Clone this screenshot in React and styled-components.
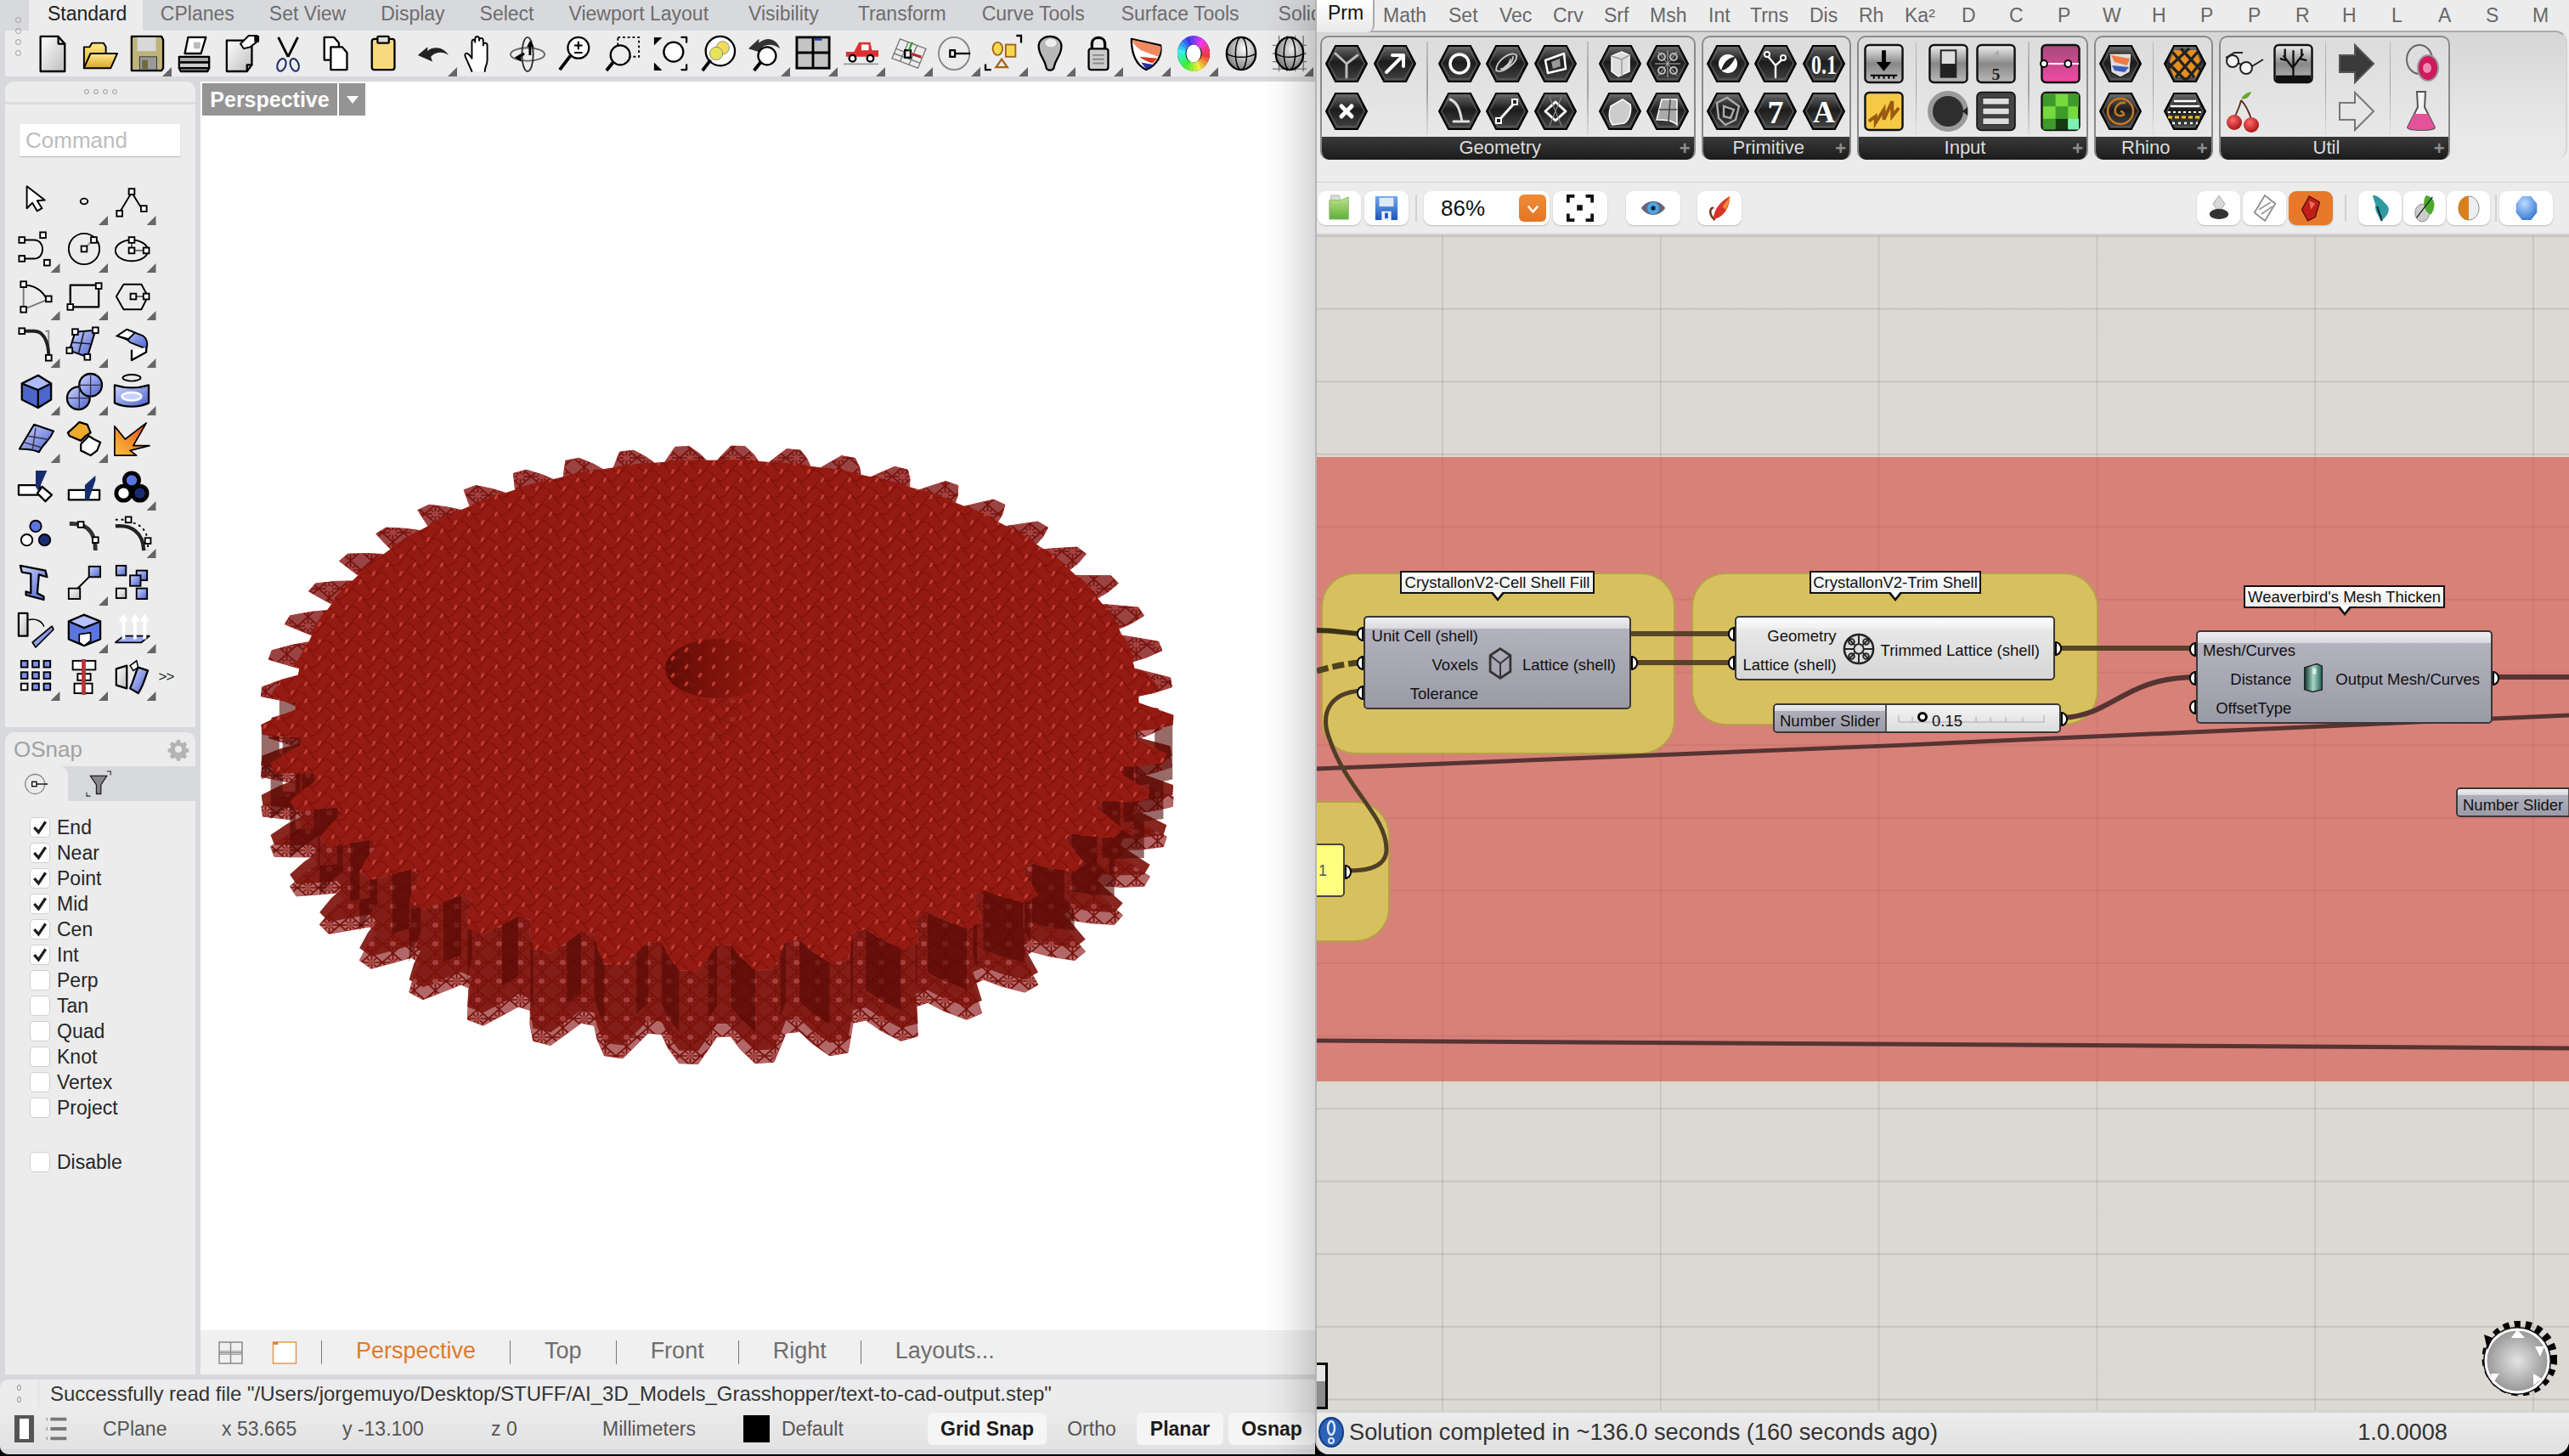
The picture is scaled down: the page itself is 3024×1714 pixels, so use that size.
import React from 'react';
import styled, { createGlobalStyle } from 'styled-components';

const Global = createGlobalStyle`
  html, body { margin: 0; padding: 0; background: #000; overflow: hidden; }
  #root { width: 3024px; height: 1714px; }
  * { box-sizing: border-box; }
`;
const SANS = '"Liberation Sans", Arial, sans-serif';
const CX = 1550, CY = 277;

const Root = styled.div`display:flex;width:3024px;height:1712px;background:#000;font-family:${SANS};overflow:hidden;`;
const Defs = styled.svg`width:0;height:0;flex:none;display:block;`;
const G = styled.svg`display:block;flex:none;width:${p => p.$w || 44}px;height:${p => p.$h || p.$w || 44}px;overflow:visible;`;

/* ---------- Rhino window ---------- */
const Rhino = styled.div`width:1548px;flex:none;display:flex;flex-direction:column;background:#d8d9dc;overflow:hidden;border-bottom-left-radius:10px;`;
const RhTabs = styled.div`height:36px;flex:none;display:flex;padding-left:34px;background:#d8d9dc;`;
const RhTab = styled.div`
  height:36px;padding:0 ${p => (p.$on ? 19 : 20.5 + (p.$extra || 0))}px 0 ${p => (p.$on ? '22px' : '20.5px')};
  font-size:23px;line-height:32px;white-space:nowrap;color:${p => (p.$on ? '#222' : '#6c6c6e')};
  background:${p => (p.$on ? '#ececec' : 'transparent')};
`;
const RhTools = styled.div`height:54px;flex:none;display:flex;align-items:center;background:#ececec;padding-left:33px;border-left:6px solid #d8d9dc;position:relative;`;
const Cell = styled.div`
  width:${p => p.$w || 56}px;height:${p => p.$h || 54}px;flex:none;display:flex;align-items:center;justify-content:center;position:relative;
  ${p => p.$fly ? `&::after{content:"";position:absolute;right:${p.$r ?? 0}px;bottom:0;width:11px;height:11px;background:#666;clip-path:polygon(100% 0,100% 100%,0 100%);}` : ''}
`;
const ToolsRow = styled.div`display:flex;margin-left:-6px;`;
const GripDots = styled.div`
  position:absolute;left:12px;top:-16px;display:flex;flex-direction:column;gap:6px;
  & i{display:block;width:7px;height:7px;border:1.5px solid #9a9a9a;border-radius:50%;}
`;
const RhBar = styled.div`height:6px;flex:none;background:#d8d9dc;`;
const RhMain = styled.div`flex:1;min-height:0;display:flex;padding-left:6px;gap:6px;`;
const LeftCol = styled.div`width:224px;flex:none;display:flex;flex-direction:column;gap:6px;`;
const ToolPanel = styled.div`height:760px;flex:none;background:#ececec;border-top-left-radius:10px;border-top-right-radius:10px;display:flex;flex-direction:column;`;
const PanelGrip = styled.div`height:27px;flex:none;border-bottom:3px solid #dcdcdf;display:flex;justify-content:center;align-items:center;gap:5px;& i{display:block;width:6px;height:6px;border:1.5px solid #9a9a9a;border-radius:50%;}`;
const CommandBox = styled.div`margin:23px 18px 0 17px;height:38px;background:#fff;box-shadow:0 1px 1px #bbb;color:#bdbdbd;font-size:26px;line-height:38px;padding-left:7px;`;
const ToolGrid = styled.div`margin:25px 0 0 8px;display:grid;grid-template-columns:repeat(4,56.5px);grid-auto-rows:56px;`;
const More = styled.div`font-size:17px;color:#222;display:flex;align-items:center;justify-content:flex-start;padding-left:3px;letter-spacing:-1px;`;
const OSnapPanel = styled.div`flex:1;background:#ececec;border-top-left-radius:10px;border-top-right-radius:10px;display:flex;flex-direction:column;`;
const OSnapHead = styled.div`height:40px;flex:none;display:flex;align-items:center;justify-content:space-between;padding:0 8px 0 10px;font-size:26px;color:#a2a2a2;`;
const OSnapTabs = styled.div`height:41px;flex:none;display:flex;background:#d8d9dc;`;
const OSnapTab = styled.div`width:${p => p.$w}px;display:flex;align-items:center;justify-content:center;background:${p => (p.$on ? '#ececec' : 'transparent')};${p => p.$on ? 'border-top-right-radius:10px;' : ''}`;
const Checks = styled.div`padding:16px 0 0 29px;display:flex;flex-direction:column;`;
const CheckRow = styled.div`height:30px;display:flex;align-items:center;gap:8px;font-size:23px;color:#262626;margin-top:${p => (p.$gap ? '34px' : '0')};`;
const CheckBox = styled.div`width:24px;height:24px;background:#fff;border:1px solid #cfcfcf;border-radius:5px;display:flex;align-items:center;justify-content:center;`;
const ViewCol = styled.div`flex:1;min-width:0;display:flex;flex-direction:column;`;
const Viewport = styled.div`flex:1;min-height:0;position:relative;background:#fff;overflow:hidden;padding:2px;`;
const ViewLabel = styled.div`position:relative;display:flex;gap:2px;height:38px;z-index:2;`;
const ViewName = styled.div`width:159px;background:#949494;color:#fff;font-weight:bold;font-size:25px;line-height:38px;text-align:center;`;
const ViewArrow = styled.div`width:31px;background:#949494;display:flex;align-items:center;justify-content:center;&::after{content:"";border:7px solid transparent;border-top:9px solid #fff;border-bottom:0;}`;
const GearSvg = styled.svg`position:absolute;left:0;top:0;width:1312px;height:1470px;`;
const ViewBar = styled.div`height:52px;flex:none;background:#f0f0f0;display:flex;align-items:center;padding:0 0 0 21px;gap:40px;font-size:27px;line-height:30px;color:#6e6e6e;`;
const ViewIcons = styled.div`display:flex;gap:34px;align-items:center;margin-right:-12px;`;
const ViewSep = styled.div`width:1px;height:28px;background:#777;`;
const ViewTab = styled.div`color:${p => (p.$on ? '#e07a2c' : '#6e6e6e')};white-space:nowrap;margin-top:-4px;`;
const CommandRow = styled.div`height:32px;flex:none;margin-top:6px;background:#ececec;display:flex;align-items:center;border-top-left-radius:10px;font-size:24px;color:#333;white-space:nowrap;padding-top:1px;`;
const CmdGrip = styled.div`width:46px;height:31px;margin-right:13px;border-right:1px solid #ddd;display:flex;flex-direction:column;justify-content:center;align-items:center;gap:7px;& i{display:block;width:5px;height:7px;border:1px solid #9a9a9a;border-radius:50%;}`;
const StatusRow = styled.div`height:50px;flex:none;background:linear-gradient(#ececec,#e2e2e2);display:flex;align-items:center;padding:2px 0 0 17px;font-size:23px;color:#555;white-space:nowrap;`;
const StatusItem = styled.div`width:${p => p.$w}px;flex:none;`;
const StatusIcons = styled.div`width:104px;flex:none;display:flex;align-items:center;gap:10px;`;
const Swatch = styled.div`width:31px;height:32px;background:#000;margin-right:14px;flex:none;`;
const SnapBtn = styled.div`width:${p => p.$w}px;height:38px;flex:none;margin-right:${p => p.$mr || 0}px;background:#f5f5f5;border-radius:6px;font-weight:bold;color:#1c1c1c;display:flex;align-items:center;justify-content:center;`;
const SnapText = styled.div`width:106px;flex:none;text-align:center;`;
const RhFoot = styled.div`height:6px;flex:none;background:#d8d9dc;`;

/* ---------- Grasshopper window ---------- */
const GH = styled.div`flex:1;min-width:0;display:flex;flex-direction:column;border-left:2px solid #b4b4b6;background:#ececec;box-shadow:-14px 0 50px rgba(0,0,0,.22);position:relative;z-index:3;border-bottom-left-radius:16px;border-bottom-right-radius:16px;overflow:hidden;`;
const GhTabs = styled.div`height:36px;flex:none;display:flex;background:#ececec;position:relative;`;
const GhActive = styled.div`width:68px;height:38px;flex:none;background:linear-gradient(#fff,#e9e9e9);font-size:23px;line-height:30px;color:#111;padding-left:13px;border-right:2px solid #aaa;border-bottom-right-radius:8px;position:relative;z-index:1;`;
const GhTab = styled.div`position:absolute;left:${p => p.$x - 1550}px;top:0;font-size:23px;line-height:36px;color:#686868;white-space:nowrap;`;
const Ribbon = styled.div`height:152px;flex:none;margin-right:2px;padding:6px 0 0 4px;display:flex;gap:7px;border-top:2px solid #aaa;border-right:2px solid #d4d4d4;border-top-right-radius:14px;border-bottom-right-radius:14px;background:linear-gradient(#d6d6d6,#e9e9e9 80%);`;
const RGroup = styled.div`display:flex;flex-direction:column;height:146px;flex:none;border-radius:10px;overflow:hidden;border:2px solid #8a8a8a;border-bottom:none;background:linear-gradient(#dcdcdc,#ebebeb);margin-top:-2px;`;
const RBody = styled.div`height:117px;flex:none;display:flex;padding:3px 2px 0 1px;`;
const RSection = styled.div`display:grid;grid-template-columns:repeat(${p => p.$n},56.5px);grid-auto-rows:56px;`;
const RDiv = styled.div`width:1.5px;margin:2px 9px 0;height:110px;background:linear-gradient(#bdbdbd,#a0a0a0 50%,#dedede);`;
const RCell = styled.div`display:flex;align-items:center;justify-content:center;`;
const RBar = styled.div`height:27px;flex:none;background:linear-gradient(#3a3a3a,#1b1b1b);color:#dcdcdc;font-size:22px;line-height:25px;text-align:center;position:relative;padding-right:18px;`;
const Plus = styled.span`position:absolute;right:4px;top:3px;font-size:22px;line-height:22px;color:#8d8d8d;font-weight:bold;`;
const RibbonGap = styled.div`height:26px;flex:none;`;
const GhToolbar = styled.div`height:63px;flex:none;border-top:1px solid #d0d0d0;border-bottom:2px solid #d2d2d2;display:flex;align-items:center;justify-content:space-between;padding:0 19px 0 1px;background:#ececec;`;
const TbGroup = styled.div`display:flex;align-items:center;`;
const TbBtn = styled.div`width:${p => p.$w || 52}px;height:40px;flex:none;margin-left:${p => p.$ml || 0}px;border-radius:9px;background:${p => (p.$on ? '#e8792b' : '#fff')};box-shadow:0 1px 2px rgba(0,0,0,.2);display:flex;align-items:center;justify-content:center;`;
const TbSep = styled.div`width:2px;height:32px;background:#d2d2d2;margin-left:${p => p.$ml}px;flex:none;`;
const Combo = styled(TbBtn)`justify-content:space-between;padding:0 4px 0 20px;font-size:26px;color:#111;`;
const ComboDrop = styled.div`width:32px;height:32px;border-radius:6px;background:linear-gradient(#f08a35,#e37626);display:flex;align-items:center;justify-content:center;`;
const Canvas = styled.div`
  flex:1;min-height:0;position:relative;overflow:hidden;background-color:#dcd9d2;
  background-image:linear-gradient(to right,rgba(60,50,40,.11) 2px,transparent 2px),linear-gradient(to bottom,rgba(60,50,40,.13) 2px,transparent 2px);
  background-size:256.8px 85.6px;background-position:147px 0,0 0;
`;
const at = p => `left:${p.$x - CX}px;top:${p.$y - CY}px;width:${p.$w}px;height:${p.$h}px;`;
const RedGroup = styled.div`position:absolute;${at}background:rgba(214,70,60,.6);`;
const YellowGroup = styled.div`position:absolute;${at}background:rgba(216,198,92,.92);border:2px solid rgba(170,150,70,.75);border-radius:40px;`;
const Wires = styled.svg`position:absolute;left:0;top:0;width:1474px;height:1383px;`;
const Label = styled.div`
  position:absolute;${at}background:linear-gradient(#fff,#ececec);border:2px solid #111;font-size:18.5px;line-height:24px;text-align:center;color:#111;white-space:nowrap;
  &::before{content:"";position:absolute;left:50%;top:100%;margin-left:-9px;border:9px solid transparent;border-top:11px solid #111;border-bottom:0;}
  &::after{content:"";position:absolute;left:50%;top:100%;margin-left:-7px;margin-top:-2px;border:7px solid transparent;border-top:9px solid #fff;border-bottom:0;}
`;
const Node = styled.div`
  position:absolute;${at}border:2px solid #383838;border-radius:5px;color:#111;font-size:18.5px;
  background:${p => (p.$white
    ? 'linear-gradient(#fdfdfd,#efeff0) 0 0/100% 13px no-repeat,linear-gradient(#ececec,#d6d6d6)'
    : 'linear-gradient(#f0f0f2,#d9d9de) 0 0/100% 13px no-repeat,linear-gradient(#b6b6c2,#9b9ba7)')};
`;
const NodeBody = styled.div`display:flex;align-items:center;padding-top:5px;height:100%;`;
const InCol = styled.div`flex:1;min-width:0;text-align:right;padding-left:6px;white-space:nowrap;& div{height:34px;line-height:34px;}`;
const OutCol = styled.div`flex:none;white-space:nowrap;padding-right:${p => p.$pr || 16}px;`;
const NodeIcon = styled.div`width:36px;flex:none;margin:-4px 8px 0 8px;display:flex;justify-content:center;`;
const Port = styled.span`
  position:absolute;top:${p => p.$t}px;${p => (p.$right ? 'right:-10px;border-radius:0 9px 9px 0;border-left:none;' : 'left:-10px;border-radius:9px 0 0 9px;border-right:none;')}
  width:8px;height:17px;background:#fff;border:2.5px solid #000;
`;
const SliderNode = styled.div`position:absolute;${at}border:2px solid #383838;border-radius:5px;display:flex;font-size:18.5px;color:#111;`;
const SliderName = styled.div`width:132px;flex:none;padding:6px 0 0 6px;line-height:26px;white-space:nowrap;background:linear-gradient(#f0f0f2,#d9d9de) 0 0/100% 7px no-repeat,linear-gradient(#b6b6c2,#9b9ba7);border-right:2px solid #555;border-radius:3px 0 0 3px;`;
const SliderRail = styled.div`flex:1;position:relative;background:linear-gradient(#f4f4f4,#dcdcdc);border-radius:0 3px 3px 0;`;
const SliderVal = styled.span`position:absolute;left:53px;top:6px;line-height:26px;`;
const PanelNode = styled.div`position:absolute;${at}background:#ffff80;border:2px solid #444;border-left:none;border-radius:0 5px 5px 0;font-size:18px;color:#555;padding:20px 0 0 2px;`;
const Knob = styled.svg`position:absolute;left:${2920 - CX}px;top:${1555 - CY}px;width:90px;height:92px;`;
const Bracket = styled.div`position:absolute;left:0;bottom:1px;width:13px;height:55px;border:3px solid #000;border-left:none;background:linear-gradient(#e6e6e6 38%,#8d8d8d 38%);`;
const GhStatus = styled.div`height:52px;flex:none;border-top:3px solid #d4d4d4;background:linear-gradient(#ececec,#e0e0e0);display:flex;align-items:center;padding:0 143px 4px 2px;font-size:27.2px;color:#333;white-space:nowrap;`;
const StatusMsg = styled.div`flex:1;margin-left:6px;`;

/* ---------- Small drawing helpers ---------- */
const K = { stroke: '#000', strokeWidth: 2.4, strokeLinejoin: 'round', strokeLinecap: 'round' };
const Sq = ({ x, y, s = 7 }) => <rect x={x - s / 2} y={y - s / 2} width={s} height={s} fill="#fff" stroke="#000" strokeWidth="2" />;

const GradDefs = () => (
  <Defs aria-hidden="true">
    <defs>
      <linearGradient id="gDoc" x1="0" y1="0" x2="1" y2="1"><stop offset="0" stopColor="#fff" /><stop offset="1" stopColor="#bdbdbd" /></linearGradient>
      <linearGradient id="gYel" x1="0" y1="0" x2="0" y2="1"><stop offset="0" stopColor="#ffeb8a" /><stop offset="1" stopColor="#d9a624" /></linearGradient>
      <linearGradient id="gBlue" x1="0" y1="0" x2="1" y2="1"><stop offset="0" stopColor="#cfd7ff" /><stop offset="1" stopColor="#4a60cc" /></linearGradient>
      <linearGradient id="gHex" x1="0" y1="0" x2="0" y2="1"><stop offset="0" stopColor="#6a6a6a" /><stop offset=".45" stopColor="#1c1c1c" /><stop offset="1" stopColor="#444" /></linearGradient>
      <linearGradient id="gSq" x1="0" y1="0" x2="0" y2="1"><stop offset="0" stopColor="#f2f2f2" /><stop offset=".5" stopColor="#888" /><stop offset="1" stopColor="#b9b9b9" /></linearGradient>
      <linearGradient id="gFlame" x1="0" y1="1" x2="1" y2="0"><stop offset="0" stopColor="#fbc23c" /><stop offset="1" stopColor="#e8461c" /></linearGradient>
      <linearGradient id="gGreen" x1="0" y1="0" x2="0" y2="1"><stop offset="0" stopColor="#bfe48a" /><stop offset="1" stopColor="#5fae3a" /></linearGradient>
      <linearGradient id="gFloppy" x1="0" y1="0" x2="0" y2="1"><stop offset="0" stopColor="#6fa8ec" /><stop offset="1" stopColor="#1f56c0" /></linearGradient>
      <radialGradient id="gSph" cx=".6" cy=".35" r=".8"><stop offset="0" stopColor="#fff" /><stop offset="1" stopColor="#666" /></radialGradient>
      <radialGradient id="gKnob" cx=".5" cy=".5" r=".55"><stop offset="0" stopColor="#e4e4e4" /><stop offset="1" stopColor="#8a8a8a" /></radialGradient>
      <radialGradient id="gRed" cx=".4" cy=".35" r=".7"><stop offset="0" stopColor="#ff6a6a" /><stop offset="1" stopColor="#a50f0f" /></radialGradient>
      <radialGradient id="gBall" cx=".4" cy=".3" r=".8"><stop offset="0" stopColor="#bcdcff" /><stop offset="1" stopColor="#2a6fd0" /></radialGradient>
      <linearGradient id="gMag" x1="0" y1="0" x2="0" y2="1"><stop offset="0" stopColor="#a64a7a" /><stop offset="1" stopColor="#f14aa4" /></linearGradient>
      <linearGradient id="gTeal" x1="0" y1="0" x2="1" y2="0"><stop offset="0" stopColor="#0c2e2a" /><stop offset=".5" stopColor="#a8d8c8" /><stop offset="1" stopColor="#1e5a50" /></linearGradient>
    </defs>
  </Defs>
);

const WHEEL_C = 2 * Math.PI * 15;
const wheel = Array.from({ length: 24 }, (_, i) => (
  <circle key={i} cx="22" cy="22" r="15" stroke={`hsl(${i * 15} 85% 58%)`} strokeWidth="10" strokeDasharray={`${WHEEL_C / 24 + 0.6} ${WHEEL_C}`} transform={`rotate(${i * 15} 22 22)`} />
));

/* ---------- Rhino top toolbar icons ---------- */
const topIcons = [
  [0, <><path d="M8 1H30L38 10V44H8Z" fill="url(#gDoc)" {...K} /><path d="M30 1V10H38" {...K} /></>],
  [0, <><path d="M3 40V14H10L13 9H27L30 14V22" fill="url(#gYel)" {...K} strokeWidth="2" /><path d="M3 40L11 22H44L36 40Z" fill="url(#gYel)" {...K} strokeWidth="2" /></>],
  [1, <><path d="M3 1H40L42 5V40L40 43H3Z" fill="#bdb27a" {...K} /><rect x="10" y="2" width="23" height="17" fill="#d8d8d8" /><rect x="13" y="26" width="21" height="16" fill="#9a9a9a" stroke="#333" /><rect x="16" y="30" width="7" height="11" fill="#6f6a3a" /></>],
  [0, <><path d="M14 2H36L30 22H10Z" fill="#fff" {...K} /><rect x="21" y="8" width="8" height="8" fill="#bbb" /><path d="M3 26H40V33H3Z" fill="#aaa" {...K} /><path d="M3 33H40V40H3Z" fill="#ccc" {...K} /><path d="M3 40H40L38 44H5Z" fill="#888" {...K} /></>],
  [0, <><path d="M3 6H34V36L28 44H3Z" fill="url(#gDoc)" {...K} /><path d="M20 10L30 0H40V8L32 14L24 16Z" fill="#fff" stroke="#000" strokeWidth="2" /><rect x="37" y="0" width="6" height="8" fill="#000" /><path d="M28 44V36H34" {...K} /></>],
  [0, <><path d="M8 2L20 26M32 2L20 26" stroke="#000" strokeWidth="3" /><ellipse cx="12" cy="36" rx="5" ry="8" transform="rotate(20 12 36)" fill="none" stroke="#1c2f6a" strokeWidth="2.2" /><ellipse cx="28" cy="36" rx="5" ry="8" transform="rotate(-20 28 36)" fill="none" stroke="#1c2f6a" strokeWidth="2.2" /></>],
  [0, <><path d="M6 2H18L24 9V30H6Z" fill="#fff" {...K} /><path d="M14 14H28L34 21V42H14Z" fill="#fff" {...K} /></>],
  [0, <><rect x="6" y="4" width="28" height="38" rx="3" fill="#f7d97e" {...K} /><rect x="13" y="1" width="14" height="8" rx="1" fill="#ddd" {...K} /></>],
  [1, <><path d="M4 24L16 14V19C24 12 36 14 42 24C34 19 26 20 20 26L22 32Z" fill="#222" /></>],
  [0, <><path d="M12 44L4 26C2 22 6 20 9 24L12 28V8C12 4 16 4 16 8V4C16 0 21 0 21 4V6C21 2 26 2 26 6V12C26 8 31 8 31 12V30C31 36 28 38 28 44" fill="#fff" {...K} strokeWidth="2" /></>],
  [0, <><ellipse cx="22" cy="23" rx="21" ry="8" {...K} stroke="#666" strokeWidth="2" /><ellipse cx="22" cy="23" rx="7" ry="21" {...K} stroke="#333" strokeWidth="2" /><path d="M25 24V10M18 22L10 27" stroke="#000" strokeWidth="3" /><path d="M21 14L25 6L30 14ZM14 22L6 27L14 32Z" fill="#000" /></>],
  [0, <><circle cx="26" cy="15" r="13" fill="#fff" {...K} /><path d="M16 25L3 42" stroke="#000" strokeWidth="4" /><path d="M26 7V17M21 12H31M21 21H31" stroke="#000" strokeWidth="2.2" /></>],
  [0, <><rect x="16" y="2" width="26" height="24" fill="none" stroke="#000" strokeWidth="2" strokeDasharray="3 3" /><circle cx="19" cy="24" r="12" fill="#eee" {...K} /><path d="M10 33L2 43" stroke="#000" strokeWidth="4" /></>],
  [0, <><path d="M2 2H12L2 12ZM2 43H12L2 33Z" fill="#000" /><circle cx="26" cy="20" r="12" fill="#fff" {...K} /><path d="M36 2H42V8M42 36V42H36" {...K} /></>],
  [0, <><ellipse cx="25" cy="19" rx="18" ry="18" fill="#fff" {...K} /><circle cx="28" cy="15" r="8" fill="#f3dc50" stroke="#888" /><circle cx="20" cy="22" r="8" fill="#e6e25a" stroke="#888" /><path d="M13 30L3 43" stroke="#000" strokeWidth="4" /></>],
  [1, <><path d="M1 16L14 4V9C24 0 36 4 40 16C32 10 24 10 18 14L20 22Z" fill="#333" /><circle cx="24" cy="25" r="11" fill="#fff" {...K} /><path d="M16 33L8 43" stroke="#000" strokeWidth="4" /></>],
  [1, <><rect x="2" y="2" width="40" height="38" fill="#c4c4c4" stroke="#000" strokeWidth="3" /><path d="M22 2V40M2 21H42" stroke="#000" strokeWidth="3" /><rect x="24" y="3" width="9" height="3" fill="#1b3fa8" /></>],
  [1, <><path d="M4 26V20H14L20 8H34L36 18H44V26Z" fill="#de3030" /><rect x="23" y="11" width="9" height="7" fill="#fff" /><circle cx="12" cy="28" r="4" fill="#fff" stroke="#000" strokeWidth="2.4" /><circle cx="34" cy="28" r="4" fill="#fff" stroke="#000" strokeWidth="2.4" /><path d="M1 35H44" stroke="#999" strokeWidth="2" /></>],
  [1, <><path d="M12 4L44 16L34 40L2 28ZM22 8L12 32M33 12L23 36M7 16L39 28M5 22L37 34" stroke="#777" strokeWidth="1.4" /><rect x="18" y="18" width="7" height="9" fill="#fff" stroke="#000" strokeWidth="2.4" /><path d="M25 22L38 26" stroke="#c02020" strokeWidth="3" /><path d="M23 18L27 8" stroke="#2ea02e" strokeWidth="2.5" /></>],
  [1, <><ellipse cx="20" cy="22" rx="19" ry="20" stroke="#888" strokeWidth="2" /><path d="M22 22H40" stroke="#000" strokeWidth="2.4" /><rect x="15" y="18" width="6" height="8" fill="#fff" stroke="#000" strokeWidth="2.4" /></>],
  [1, <><path d="M38 0H44V9" stroke="#000" strokeWidth="2.4" /><path d="M0 35V42H7" stroke="#000" strokeWidth="2.4" /><ellipse cx="15" cy="16" rx="6" ry="8" fill="#f5d94e" stroke="#a5641c" strokeWidth="2" /><rect x="25" y="11" width="12" height="15" fill="#f5d94e" stroke="#a5641c" strokeWidth="2" /><path d="M20 29L27 39H13Z" stroke="#a5641c" strokeWidth="2.4" /></>],
  [1, <><path d="M16 38C14 28 7 24 7 13C7 5 14 1 21 1C28 1 35 5 35 13C35 24 28 28 26 38C26 44 16 44 16 38Z" fill="#b8b8b8" {...K} /><ellipse cx="22" cy="9" rx="7" ry="5" fill="#eee" /></>],
  [1, <><path d="M14 16V10C14 0 30 0 30 10V16" stroke="#000" strokeWidth="3.5" /><rect x="10" y="16" width="24" height="26" rx="3" fill="#ccc" {...K} /><path d="M15 24H29M15 29H29M15 34H29" stroke="#888" strokeWidth="2" /></>],
  [1, <><path d="M4 4L40 12C42 24 36 36 22 42C10 36 4 24 4 4Z" fill="#fff" {...K} /><path d="M5 5L40 13C41 18 39 22 37 26L16 18C10 14 6 10 5 5Z" fill="#ee8a60" /><path d="M14 26L36 28L30 34C24 32 18 30 14 26Z" fill="#d83a20" /><path d="M16 33L32 36L22 41Z" fill="#2434a0" /></>],
  [1, <><ellipse cx="22" cy="22" rx="20" ry="21.5" fill="#000" /><g transform="translate(0 -2.2) scale(1 1.1)">{wheel}</g><ellipse cx="22" cy="22" rx="9" ry="11" fill="#fff" /></>],
  [0, <><ellipse cx="22" cy="22" rx="18" ry="20" fill="url(#gSph)" {...K} /><ellipse cx="22" cy="22" rx="7" ry="20" {...K} strokeWidth="1.6" /><path d="M4 22C12 28 32 28 40 22" {...K} strokeWidth="1.6" /></>],
  [1, <><path d="M2 12H44M2 22H44M2 32H44M2 41H44M10 0V44M20 0V44M30 0V44M40 0V44" stroke="#777" strokeWidth="1.4" /><ellipse cx="23" cy="22" rx="17" ry="20" fill="url(#gSph)" {...K} /><ellipse cx="23" cy="22" rx="7" ry="20" {...K} strokeWidth="1.6" /><path d="M6 22C14 28 32 28 40 22" {...K} strokeWidth="1.6" /></>],
];

/* ---------- Rhino left tool icons ---------- */
const B = { fill: 'url(#gBlue)', stroke: '#000', strokeWidth: 2.2, strokeLinejoin: 'round' };
const leftIcons = [
  [0, <path d="M6 4V36L14 28L21 40L28 36L21 25L32 24Z" fill="#fff" {...K} strokeWidth="2.4" transform="translate(6 0) scale(.85)" />],
  [1, <ellipse cx="22" cy="22" rx="4.5" ry="3.5" {...K} strokeWidth="2" />],
  [1, <><path d="M7 36L22 11L35 32" {...K} strokeWidth="2" /><Sq x={7} y={37} /><Sq x={22} y={10} /><Sq x={37} y={31} /></>],
  [1, <><path d="M6 11H20C34 11 34 34 20 34H6" {...K} strokeWidth="2" /><Sq x={5} y={11} /><Sq x={5} y={34} /><Sq x={31} y={5} /><Sq x={36} y={39} /></>],
  [1, <><circle cx="22" cy="22" r="19" {...K} strokeWidth="2" /><path d="M22 22L33 11" stroke="#999" strokeWidth="2" /><Sq x={22} y={22} /><Sq x={34} y={11} /></>],
  [1, <><ellipse cx="22" cy="24" rx="20" ry="13" {...K} strokeWidth="2" /><path d="M22 11V24H40" stroke="#666" strokeWidth="2" /><Sq x={22} y={11} /><Sq x={22} y={24} /><Sq x={40} y={24} /></>],
  [1, <><path d="M7 8C20 8 30 14 36 26L7 38Z" stroke="#777" strokeWidth="2" /><path d="M7 8C20 8 30 14 36 26" {...K} strokeWidth="2" /><Sq x={7} y={7} /><Sq x={38} y={25} /><Sq x={7} y={38} /></>],
  [1, <><rect x="5" y="8" width="35" height="27" {...K} strokeWidth="2.4" /><Sq x={40} y={9} /><Sq x={5} y={35} /></>],
  [1, <><path d="M3 22L12 7H34L42 22L34 38H12Z" {...K} strokeWidth="2" /><path d="M24 22H40" stroke="#666" strokeWidth="2" /><Sq x={24} y={22} /><Sq x={40} y={22} /></>],
  [1, <><path d="M34 6H38V40" stroke="#888" strokeWidth="2" /><path d="M5 6H20C30 6 38 16 38 38" stroke="#222" strokeWidth="4" /><Sq x={5} y={6} /><Sq x={38} y={39} /></>],
  [1, <><path d="M11 7L36 5L26 38L4 30Z" {...B} /><path d="M8 20L32 22M22 6L15 34" stroke="#223" strokeWidth="1.8" /><Sq x={11} y={7} /><Sq x={36} y={5} /><Sq x={4} y={30} /><Sq x={26} y={38} /></>],
  [1, <><path d="M4 12L16 4L36 12C42 16 42 24 40 28L20 20C18 16 10 14 4 12Z" fill="url(#gBlue)" stroke="#000" strokeWidth="2" /><path d="M4 12L16 4L26 8L18 16Z" fill="#fff" stroke="#000" strokeWidth="2" /><path d="M22 30V42L40 32V26" fill="#fff" {...K} /></>],
  [1, <><path d="M5 12L25 2L41 12V32L25 42L5 32Z" fill="#4d66cc" {...K} /><path d="M5 12L25 20L41 12L25 2Z" fill="#aebcff" {...K} /><path d="M25 20V42" {...K} /></>],
  [1, <><circle cx="15" cy="30" r="14" fill="url(#gBlue)" {...K} /><circle cx="30" cy="14" r="14" fill="url(#gBlue)" {...K} /><path d="M16 16V44M1 30H29M30 0V28M16 14H44" stroke="#334" strokeWidth="1.4" /></>],
  [1, <><ellipse cx="22" cy="5" rx="11" ry="4" stroke="#000" strokeWidth="2" /><path d="M1 14C14 18 30 18 43 14V36C30 42 14 42 1 36Z" fill="url(#gBlue)" {...K} /><ellipse cx="22" cy="28" rx="12" ry="5" fill="#c8d2ff" stroke="#fff" strokeWidth="2.5" /></>],
  [1, <><path d="M2 34L20 4L44 12C38 26 32 26 26 38C18 34 10 34 2 34Z" {...B} /><path d="M12 18L36 22M22 8L18 36M8 26L28 32" stroke="#334" strokeWidth="1.5" /></>],
  [1, <><path d="M2 14L12 5L16 1L26 4L30 14L24 18L18 24L4 18Z" fill="#eeaa2c" {...K} /><path d="M18 28L28 18L34 22L42 26L38 36L30 42L18 36Z" fill="#fff" {...K} /></>],
  [0, <path d="M1 42V6L14 22L40 2L24 30L44 30L20 36L28 42Z" fill="url(#gFlame)" {...K} strokeWidth="1.8" />],
  [0, <><rect x="1" y="20" width="26" height="12" fill="#fff" {...K} /><path d="M22 2H36L25 27L22 22Z" fill="#182c70" /><path d="M24 30L30 22L42 32L34 40Z" fill="#fff" {...K} /></>],
  [0, <><rect x="3" y="26" width="38" height="12" fill="#fff" {...K} /><path d="M23 38V20L36 8V14L28 38Z" fill="#182c70" /></>],
  [1, <><circle cx="22" cy="14" r="9" fill="#5a74e0" {...K} strokeWidth="5" /><circle cx="12" cy="30" r="9" fill="#fff" {...K} strokeWidth="5" /><circle cx="32" cy="30" r="9" fill="#182c70" {...K} strokeWidth="5" /></>],
  [0, <><ellipse cx="22" cy="12" rx="7" ry="7" fill="#5a74e0" stroke="#000" strokeWidth="2" /><ellipse cx="11" cy="29" rx="7" ry="7" fill="#fff" stroke="#000" strokeWidth="2" /><ellipse cx="33" cy="29" rx="7" ry="7" fill="#182c70" stroke="#000" strokeWidth="2" /></>],
  [0, <><path d="M4 9C20 8 36 14 36 42" stroke="#333" strokeWidth="5" /><Sq x={18} y={10} /><Sq x={36} y={29} /></>],
  [1, <><path d="M2 12C22 10 36 20 37 42" stroke="#222" strokeWidth="4.5" /><path d="M2 4H22M24 8C32 10 40 16 42 30V42" stroke="#000" strokeWidth="2" strokeDasharray="3 4" /><Sq x={18} y={4} /><Sq x={42} y={30} /></>],
  [0, <><path d="M3 2L34 8L36 16L26 13L24 36L32 40V44L10 38V34L16 36V12L5 10Z" fill="url(#gBlue)" {...K} /></>],
  [1, <><path d="M10 34L32 12" stroke="#000" strokeWidth="2" /><rect x="3" y="30" width="14" height="13" fill="url(#gDoc)" stroke="#000" strokeWidth="2" /><rect x="28" y="3" width="14" height="13" fill="url(#gBlue)" stroke="#000" strokeWidth="2" /></>],
  [0, <><rect x="3" y="2" width="12" height="12" fill="url(#gBlue)" stroke="#000" strokeWidth="2" /><rect x="3" y="30" width="12" height="12" fill="url(#gDoc)" stroke="#000" strokeWidth="2" /><rect x="28" y="8" width="13" height="12" fill="url(#gBlue)" stroke="#000" strokeWidth="2" /><rect x="20" y="14" width="13" height="13" fill="url(#gBlue)" stroke="#000" strokeWidth="2" /><rect x="28" y="30" width="13" height="13" fill="url(#gBlue)" stroke="#000" strokeWidth="2" /></>],
  [0, <><rect x="1" y="2" width="11" height="28" fill="url(#gDoc)" {...K} /><path d="M14 10C22 8 30 12 32 18" {...K} strokeWidth="1.6" /><path d="M18 38L42 18L44 22L22 44Z" fill="url(#gBlue)" {...K} strokeWidth="1.8" /></>],
  [1, <><path d="M3 12L22 4L42 12V34L22 42L3 34Z" fill="#5a74e0" {...K} /><path d="M3 12L22 20L42 12L22 4Z" fill="#b6c2ff" {...K} /><path d="M16 38V28L30 26V36L22 42Z" fill="#fff" {...K} strokeWidth="1.8" /></>],
  [1, <><path d="M2 38L12 30H44L34 38Z" fill="#9aa8f0" {...K} strokeWidth="1.8" /><path d="M10 34V12H6L12 2L18 12H14V34ZM24 34V12H20L26 2L32 12H28V34ZM36 34V12H32L38 2L44 12H40V34Z" fill="#fff" /></>],
  [1, <><g stroke="#000" strokeWidth="2">{[8, 22, 36].flatMap((x, i) => [6, 20, 34].map((y, j) => <rect key={`${i}${j}`} x={x - 4} y={y - 4} width="8" height="8" fill={j === 2 && i === 0 ? '#fff' : '#7c90ee'} />))}</g></>],
  [1, <><rect x="8" y="2" width="28" height="11" fill="#fff" stroke="#000" strokeWidth="2" /><rect x="14" y="18" width="16" height="8" fill="#fff" stroke="#000" strokeWidth="2" /><rect x="10" y="30" width="22" height="12" fill="#fff" stroke="#000" strokeWidth="2" /><rect x="19" y="0" width="5" height="44" fill="#b6353a" /></>],
  [1, <><path d="M3 12L16 8V36L3 32Z" fill="url(#gDoc)" {...K} /><path d="M20 8L28 2L30 10L24 14Z" fill="#fff" stroke="#000" strokeWidth="1.6" /><path d="M20 36C26 22 26 18 30 10L42 14C38 24 36 34 30 42Z" fill="url(#gBlue)" {...K} /></>],
];

/* ---------- Grasshopper ribbon icons ---------- */
const W = { stroke: '#fff', strokeWidth: 3, strokeLinejoin: 'round', strokeLinecap: 'round' };
const Hex = ({ children }) => (
  <G viewBox="0 0 50 44" $w={50} $h={44}>
    <path d="M12 1H38L49 22L38 43H12L1 22Z" fill="url(#gHex)" stroke="#000" strokeWidth="2" />
    <path d="M14 4H36L46 22L36 40H14L4 22Z" fill="none" stroke="#6a6a6a" strokeWidth="1" />
    <g fill="none">{children}</g>
  </G>
);
const Tile = ({ children, bg = 'url(#gSq)' }) => (
  <G viewBox="0 0 48 48" $w={47} $h={48}>
    <rect x="1.5" y="1.5" width="45" height="45" rx="5" fill={bg} stroke="#111" strokeWidth="2.5" />
    <g fill="none">{children}</g>
  </G>
);
const Plain = ({ children }) => <G viewBox="0 0 50 50" $w={50} $h={50}><g fill="none">{children}</g></G>;
const T = { fontFamily: '"Liberation Serif", serif', fontWeight: 'bold', fill: '#fff', textAnchor: 'middle' };

const ribbon = [
  { name: 'Geometry', sections: [
    [2, [<Hex><path d="M25 22L12 10M25 22L38 12M25 22V38" {...W} stroke="#bbb" /></Hex>, <Hex><path d="M15 32L33 14M22 12H35V25" {...W} strokeWidth="4" /></Hex>, <Hex><path d="M19 16L31 28M31 16L19 28" {...W} strokeWidth="5" /></Hex>, <span />]],
    [3, [<Hex><circle cx="25" cy="22" r="11" {...W} strokeWidth="3.5" /></Hex>, <Hex><path d="M12 30C20 34 38 20 36 12C30 6 12 18 12 30ZM18 28C24 28 32 20 32 14M22 26C26 24 28 20 29 17" {...W} strokeWidth="1.8" stroke="#ccc" /></Hex>, <Hex><path d="M13 18L35 10L37 28L16 33Z" {...W} strokeWidth="2.5" /><path d="M20 20L30 16L31 25L22 28Z" fill="#999" /></Hex>, <Hex><path d="M14 8C24 12 26 24 28 34H36M28 34H18" {...W} stroke="#ddd" /></Hex>, <Hex><path d="M15 33L34 12" {...W} /><rect x="12" y="30" width="6" height="6" fill="#222" stroke="#fff" strokeWidth="2" /><rect x="31" y="8" width="6" height="6" fill="#222" stroke="#fff" strokeWidth="2" /></Hex>, <Hex><path d="M25 11L37 22L25 33L13 22Z" {...W} /><path d="M18 5L32 39M32 5L18 39" stroke="#888" strokeWidth="1.2" /></Hex>]],
    [2, [<Hex><path d="M15 13L27 8L36 12V31L23 37L15 31Z" fill="#ddd" stroke="#fff" strokeWidth="1.5" /><path d="M15 13L27 17L36 12M27 17V37" stroke="#999" strokeWidth="1.5" /></Hex>, <Hex><g stroke="#bbb" strokeWidth="2"><circle cx="18" cy="14" r="4" /><circle cx="32" cy="14" r="4" /><circle cx="18" cy="30" r="4" /><circle cx="32" cy="30" r="4" /><path d="M10 22H40M25 6V38M14 8L36 36M36 8L14 36" strokeWidth="1" /></g></Hex>, <Hex><path d="M14 16L28 8L37 14C39 22 36 32 30 36L16 38C10 30 12 22 14 16Z" fill="#ccc" stroke="#fff" strokeWidth="1.5" /></Hex>, <Hex><path d="M18 8H36V38C30 32 20 32 12 32Z" fill="#aaa" stroke="#fff" strokeWidth="1.5" /><path d="M28 8L26 34M15 20H36" stroke="#444" strokeWidth="1.5" /></Hex>]],
  ] },
  { name: 'Primitive', sections: [
    [3, [<Hex><circle cx="25" cy="22" r="11" fill="#fff" /><path d="M34 14C30 22 26 28 17 30C20 20 26 14 34 14Z" fill="#222" /></Hex>, <Hex><path d="M25 38V24L15 12M25 24L34 16" {...W} strokeWidth="2.4" /><circle cx="15" cy="11" r="3" fill="#222" stroke="#fff" strokeWidth="2" /><circle cx="34" cy="15" r="3" fill="#222" stroke="#fff" strokeWidth="2" /></Hex>, <Hex><text x="25" y="34" fontSize="31" {...T} textLength="30" lengthAdjust="spacingAndGlyphs">0.1</text></Hex>, <Hex><path d="M12 12L24 6L38 16L34 32L22 38L14 30Z M20 16L32 20L28 30L20 28Z" stroke="#aaa" strokeWidth="2.4" /></Hex>, <Hex><text x="25" y="36" fontSize="38" {...T}>7</text></Hex>, <Hex><text x="25" y="35" fontSize="36" {...T}>A</text></Hex>]],
  ] },
  { name: 'Input', sections: [
    [1, [<Tile><path d="M24 8V24" stroke="#000" strokeWidth="5" /><path d="M15 22L24 33L33 22Z" fill="#000" /><path d="M8 38H40M12 38V42M18 38V42M24 38V42M30 38V42M36 38V42" stroke="#000" strokeWidth="2" /></Tile>, <Tile bg="#f6c945"><path d="M6 36L14 30L14 38L24 22L24 34L34 12L34 30L42 20" stroke="#9a5a12" strokeWidth="4" /></Tile>]],
    [2, [<Tile><rect x="14" y="7" width="20" height="34" fill="#222" /><rect x="16" y="9" width="16" height="15" fill="#ddd" /></Tile>, <Tile><text x="24" y="20" fontSize="18" fill="#aaa" fontWeight="bold" textAnchor="middle" fontFamily="Liberation Serif, serif">4</text><text x="24" y="43" fontSize="20" fill="#222" fontWeight="bold" textAnchor="middle" fontFamily="Liberation Serif, serif">5</text></Tile>, <Plain><circle cx="25" cy="25" r="24" fill="#999" /><circle cx="25" cy="25" r="18" fill="#2e2e2e" /><path d="M42 25L48 20V30Z" fill="#222" /></Plain>, <Tile><rect x="1.5" y="1.5" width="45" height="45" rx="5" fill="#444" stroke="#111" /><rect x="8" y="8" width="32" height="8" fill="#ddd" stroke="#222" /><rect x="8" y="20" width="32" height="8" fill="#ddd" stroke="#222" /><rect x="8" y="32" width="32" height="8" fill="#ddd" stroke="#222" /></Tile>]],
    [1, [<Tile bg="url(#gMag)"><path d="M2 24H46" stroke="#fff" strokeWidth="2" /><circle cx="4" cy="24" r="4" fill="#fff" stroke="#000" strokeWidth="2" /><circle cx="33" cy="24" r="4" fill="#fff" stroke="#000" strokeWidth="2" /></Tile>, <Tile bg="#76d93c"><path d="M3 3H18V18H3ZM18 18H33V33H18ZM3 33H18V46H3ZM33 3H46V18H33Z" fill="#3e9a2a" /><path d="M18 33H33V46H18Z" fill="#143c10" /><path d="M33 33H46V46H33Z" fill="#7cf0b0" /></Tile>]],
  ] },
  { name: 'Rhino', sections: [
    [1, [<Hex><path d="M12 10H38L36 32L25 38L14 32Z" fill="#ddd" stroke="#111" /><path d="M14 12L36 16L33 24L18 20Z" fill="#f07a40" /><path d="M15 24L35 26L30 32L18 30Z" fill="#3a5cc0" /></Hex>, <Hex><circle cx="25" cy="22" r="15" stroke="#c87820" strokeWidth="2.5" /><path d="M25 22A4 4 0 0 1 29 26A7 7 0 0 1 19 24A10 10 0 0 1 31 12" stroke="#c87820" strokeWidth="2.5" /></Hex>]],
    [1, [<Hex><path d="M6 22L12 6H38L44 22L38 38H12Z" fill="#e58e1e" /><path d="M10 8L36 38M20 4L44 30M4 20L26 42M40 8L14 38M30 4L4 28M46 18L26 42" stroke="#222" strokeWidth="3.4" /></Hex>, <Hex><path d="M12 10H38M8 16H42" stroke="#fff" strokeWidth="2.5" /><path d="M5 23H45" stroke="#fff" strokeWidth="2" strokeDasharray="3 3" /><path d="M5 29H45" stroke="#f3c21c" strokeWidth="3" strokeDasharray="5 3" /><path d="M10 36H40" stroke="#fff" strokeWidth="2.5" strokeDasharray="3 4" /></Hex>]],
  ] },
  { name: 'Util', sections: [
    [2, [<Plain><circle cx="10" cy="22" r="7" fill="#f4f4f4" stroke="#222" strokeWidth="2" /><circle cx="26" cy="30" r="7" fill="#f4f4f4" stroke="#222" strokeWidth="2" /><path d="M2 18L12 12H22M33 28L46 20M16 24L20 26" stroke="#222" strokeWidth="2" /></Plain>, <Tile><path d="M24 40V22M24 30L12 14M24 28L36 12M24 22L24 8M16 20L8 18M32 18L40 20M14 16L14 6M34 14V6" stroke="#111" strokeWidth="2.4" /><rect x="3" y="38" width="42" height="8" fill="#111" /></Tile>, <Plain><path d="M20 12C18 22 14 26 13 32M20 12C26 18 30 28 32 34" stroke="#5a2a1a" strokeWidth="1.8" /><path d="M20 10C24 4 30 2 32 2C30 8 26 12 20 10Z" fill="#69a52c" /><circle cx="12" cy="38" r="9" fill="url(#gRed)" /><circle cx="32" cy="41" r="9" fill="url(#gRed)" /></Plain>, <span />]],
    [1, [<Plain><path d="M4 15H22V3L44 25L22 47V35H4Z" fill="#3a3a3a" stroke="#555" strokeWidth="2" /></Plain>, <Plain><path d="M4 15H22V3L44 25L22 47V35H4Z" fill="#e6e6e6" stroke="#777" strokeWidth="2" /></Plain>]],
    [1, [<Plain><ellipse cx="22" cy="20" rx="15" ry="17" fill="#ddd" stroke="#666" strokeWidth="2" /><ellipse cx="32" cy="30" rx="12" ry="15" fill="#cc1a5c" stroke="#999" strokeWidth="2" /><ellipse cx="31" cy="30" rx="5" ry="6" fill="#f08ab4" /></Plain>, <Plain><path d="M19 2H29L28 20L40 44C40 48 10 48 8 44L20 20Z" fill="#f4f4f4" stroke="#555" strokeWidth="2" /><path d="M16 28H32L40 44C38 48 10 48 8 44Z" fill="#e6529a" /></Plain>]],
  ] },
];

/* ---------- Gear ---------- */
const proj = (u, v, d = 0) => { const s = 1 / (1 - 0.152 * v); return [844 + 531 * u * s, 787 + 302 * v * s + d * s]; };
const N = 44, P = (2 * Math.PI) / N;
const prof = [[0, 0.925], [0.12, 0.96], [0.25, 1], [0.5, 1], [0.68, 0.96], [0.8, 0.925]];
const outline = [];
for (let i = 0; i < N; i++) prof.forEach(([f, r], j) => { const a = i * P + f * P; outline.push({ u: Math.cos(a) * r, v: Math.sin(a) * r, k: j }); });
const ring = (pts, d = 0) => 'M' + pts.map(p => proj(p.u, p.v, d).map(n => n.toFixed(1)).join(' ')).join('L') + 'Z';
const quads = (from, to, test) => outline.map((p, i) => {
  const q = outline[(i + 1) % outline.length];
  if (test && !test(p, i)) return '';
  const a = proj(p.u, p.v, from), b = proj(q.u, q.v, from), c = proj(q.u, q.v, to), e = proj(p.u, p.v, to);
  return `M${a[0].toFixed(1)} ${a[1].toFixed(1)}L${b[0].toFixed(1)} ${b[1].toFixed(1)}L${c[0].toFixed(1)} ${c[1].toFixed(1)}L${e[0].toFixed(1)} ${e[1].toFixed(1)}Z`;
}).join('');
const solid = outline.map(p => {
  const t = Math.min(1, Math.max(0, (p.v + 0.05) / 0.25));
  const lim = 0.93 + (1.01 - 0.93) * t;
  const r = Math.hypot(p.u, p.v);
  const nr = Math.min(r, lim);
  return { u: (p.u / r) * nr, v: (p.v / r) * nr };
});
const DEPTH = 93, MID = 80;
const gearAll = ring(outline), gearLow = ring(outline, DEPTH), gearMid = ring(outline, MID);
const sideAll = quads(0, DEPTH), sideMid = quads(0, MID);
const slots = quads(0, 62, p => p.v > 0.1 && (p.k === 3 || p.k === 4 || p.k === 0));
const gearSolid = ring(solid);

const Gear = () => (
  <GearSvg viewBox="236 96 1312 1470">
    <defs>
      <clipPath id="cAll"><path d={gearAll} /><path d={gearLow} /><path d={sideAll} /></clipPath>
      <clipPath id="cTop"><path d={gearSolid} /></clipPath>
      <pattern id="pLat" patternUnits="userSpaceOnUse" width="25" height="22">
        <path d="M0 11L12.5 0L25 11L12.5 22ZM0 11H25M12.5 0V22M6 5L19 17M19 5L6 17" fill="none" stroke="#7a120c" strokeWidth="1.7" />
        <ellipse cx="12.5" cy="11" rx="3.5" ry="3" fill="rgba(232,130,130,.4)" />
      </pattern>
      <pattern id="pTop" patternUnits="userSpaceOnUse" width="32" height="20">
        <path d="M0 10Q8 -2 16 10T32 10M-8 0Q0 -12 8 0T24 0T40 0M-8 20Q0 8 8 20T24 20T40 20" fill="none" stroke="#7a110a" strokeWidth="1.7" opacity=".7" />
        <ellipse cx="8" cy="5" rx="1.7" ry="3.2" transform="rotate(30 8 5)" fill="#c03c32" />
        <ellipse cx="24" cy="15" rx="1.7" ry="3.2" transform="rotate(30 24 15)" fill="#c03c32" />
      </pattern>
      <linearGradient id="gHole" x1="0" y1="0" x2="1" y2="0"><stop offset="0" stopColor="#5a0a04" stopOpacity=".95" /><stop offset=".55" stopColor="#6d0f08" stopOpacity=".55" /><stop offset="1" stopColor="#7d140c" stopOpacity=".12" /></linearGradient>
    </defs>
    <path d={gearLow} fill="rgba(176,100,100,.9)" stroke="#b84a4a" strokeWidth="1" />
    <path d={sideAll} fill="rgba(176,100,100,.75)" />
    <path d={gearMid} fill="rgba(128,24,18,.8)" />
    <path d={sideMid} fill="rgba(128,24,18,.7)" />
    <path d={gearAll} fill="rgba(156,70,70,.78)" stroke="#b04040" strokeWidth="1" />
    <rect x="236" y="96" width="1312" height="1470" fill="url(#pLat)" clipPath="url(#cAll)" />
    <path d={slots} fill="rgba(84,8,4,.6)" />
    <path d={gearSolid} fill="#951a11" />
    <ellipse cx="845" cy="787" rx="62" ry="35" fill="url(#gHole)" />
    <rect x="236" y="96" width="1312" height="1470" fill="url(#pTop)" clipPath="url(#cTop)" />
    <path d="M820 822L880 824L875 860L830 880Z" fill="url(#pLat)" opacity=".4" />
  </GearSvg>
);

/* ---------- Data ---------- */
const rhinoTabs = [['CPlanes', 0], ['Set View', 0], ['Display', 0], ['Select', 0], ['Viewport Layout', 6], ['Visibility', 5], ['Transform', 1], ['Curve Tools', 2], ['Surface Tools', 5], ['Solid', 0]];
const ghTabs = [['Math', 1628], ['Set', 1705], ['Vec', 1765], ['Crv', 1828], ['Srf', 1888], ['Msh', 1942], ['Int', 2011], ['Trns', 2060], ['Dis', 2130], ['Rh', 2188], ['Ka²', 2242], ['D', 2309], ['C', 2365], ['P', 2422], ['W', 2475], ['H', 2533], ['P', 2590], ['P', 2646], ['R', 2702], ['H', 2757], ['L', 2815], ['A', 2870], ['S', 2926], ['M', 2981]];
const snaps = [['End', 1], ['Near', 1], ['Point', 1], ['Mid', 1], ['Cen', 1], ['Int', 1], ['Perp', 0], ['Tan', 0], ['Quad', 0], ['Knot', 0], ['Vertex', 0], ['Project', 0]];

const Tick = () => <G viewBox="0 0 24 24" $w={20} $h={20}><path d="M4 12L10 19L20 4" fill="none" stroke="#1d1d1d" strokeWidth="4" /></G>;

const OsnapGlyph = () => (
  <G viewBox="0 0 34 34" $w={34} $h={30}><circle cx="15" cy="17" r="13" fill="none" stroke="#888" strokeWidth="1.5" /><path d="M16 17H32" stroke="#000" strokeWidth="1.5" /><rect x="11" y="14" width="6" height="6" fill="#fff" stroke="#000" strokeWidth="1.5" /></G>
);
const Funnel = () => (
  <G viewBox="0 0 34 34" $w={32} $h={30}><path d="M5 6H27L19 18V30H13V18Z" fill="#888" stroke="#222" strokeWidth="1.5" /><path d="M27 0H32V5M0 28V33H5" fill="none" stroke="#222" strokeWidth="1.2" /></G>
);
const Cog = () => (
  <G viewBox="0 0 24 24" $w={24} $h={24}><path fill="#b4b4b4" d="M10 1h4l.6 3 2.2.9 2.6-1.7 2.8 2.8-1.7 2.6.9 2.2 3 .6v4l-3 .6-.9 2.2 1.7 2.6-2.8 2.8-2.6-1.7-2.2.9-.6 3h-4l-.6-3-2.2-.9-2.6 1.7-2.8-2.8 1.7-2.6-.9-2.2-3-.6v-4l3-.6.9-2.2-1.7-2.6 2.8-2.8 2.6 1.7 2.2-.9zM12 8a4 4 0 1 0 0 8 4 4 0 0 0 0-8z" /></G>
);

const CellIcon = () => (
  <G viewBox="0 0 36 48" $w={32} $h={38}><path d="M18 2L33 12V36L18 46L3 36V12Z" fill="none" stroke="#333" strokeWidth="3.5" /><path d="M18 24L3 12M18 24L33 12M18 24V46" stroke="#333" strokeWidth="2.5" /></G>
);
const TrimIcon = () => (
  <G viewBox="0 0 40 40" $w={38} $h={38}><circle cx="20" cy="20" r="18" fill="#ddd" stroke="#222" strokeWidth="2.6" /><g fill="none" stroke="#222" strokeWidth="2"><circle cx="20" cy="20" r="6" /><path d="M20 2V14M20 26V38M2 20H14M26 20H38M7 7L15 15M25 25L33 33M33 7L25 15M15 25L7 33" /><circle cx="11" cy="11" r="3.5" /><circle cx="29" cy="11" r="3.5" /><circle cx="11" cy="29" r="3.5" /><circle cx="29" cy="29" r="3.5" /></g></G>
);
const ThickenIcon = () => (
  <G viewBox="0 0 30 40" $w={26} $h={36}><path d="M3 6L20 1L27 4V36L14 39L3 36Z" fill="url(#gTeal)" stroke="#222" strokeWidth="1.5" /><rect x="14" y="7" width="5" height="8" fill="#d8eee6" /></G>
);

const App = () => (
  <>
    <Global />
    <Root>
      <GradDefs />
      <Rhino>
        <RhTabs>
          <RhTab $on>Standard</RhTab>
          {rhinoTabs.map(([t, e]) => <RhTab key={t} $extra={e}>{t}</RhTab>)}
        </RhTabs>
        <RhTools>
          <GripDots><i /><i /><i /><i /></GripDots>
          <ToolsRow>
            {topIcons.map(([fly, g], i) => (
              <Cell key={i} $fly={fly} $r={-1}><G viewBox="0 0 44 44" $w={42}><g fill="none">{g}</g></G></Cell>
            ))}
          </ToolsRow>
        </RhTools>
        <RhBar />
        <RhMain>
          <LeftCol>
            <ToolPanel>
              <PanelGrip><i /><i /><i /><i /></PanelGrip>
              <CommandBox>Command</CommandBox>
              <ToolGrid>
                {leftIcons.map(([fly, g], i) => (
                  <React.Fragment key={i}>
                    {i > 0 && i % 3 === 0 ? <span /> : null}
                    <Cell $w={56.5} $h={56} $fly={fly}><G viewBox="0 0 44 44" $w={42}><g fill="none">{g}</g></G></Cell>
                  </React.Fragment>
                ))}
                <More>&gt;&gt;</More>
              </ToolGrid>
            </ToolPanel>
            <OSnapPanel>
              <OSnapHead>OSnap<Cog /></OSnapHead>
              <OSnapTabs>
                <OSnapTab $on $w={74}><OsnapGlyph /></OSnapTab>
                <OSnapTab $w={74}><Funnel /></OSnapTab>
              </OSnapTabs>
              <Checks>
                {snaps.map(([t, on]) => (
                  <CheckRow key={t}><CheckBox>{on ? <Tick /> : null}</CheckBox>{t}</CheckRow>
                ))}
                <CheckRow $gap><CheckBox />Disable</CheckRow>
              </Checks>
            </OSnapPanel>
          </LeftCol>
          <ViewCol>
            <Viewport>
              <Gear />
              <ViewLabel><ViewName>Perspective</ViewName><ViewArrow /></ViewLabel>
            </Viewport>
            <ViewBar>
              <ViewIcons>
                <G viewBox="0 0 30 28" $w={29} $h={27}><path d="M1 1H29V27H1ZM15 1V27M1 14H29" fill="none" stroke="#888" strokeWidth="1.5" /><path d="M1 12H29V16H1Z" fill="none" stroke="#999" /></G>
                <G viewBox="0 0 30 28" $w={30} $h={27}><rect x="1" y="1" width="28" height="26" fill="#fff" stroke="#e4944e" strokeWidth="1.5" /><rect x="1" y="1" width="6" height="3" fill="#e07a2c" /></G>
              </ViewIcons>
              <ViewSep />
              <ViewTab $on>Perspective</ViewTab>
              <ViewSep />
              <ViewTab>Top</ViewTab>
              <ViewSep />
              <ViewTab>Front</ViewTab>
              <ViewSep />
              <ViewTab>Right</ViewTab>
              <ViewSep />
              <ViewTab>Layouts...</ViewTab>
            </ViewBar>
          </ViewCol>
        </RhMain>
        <CommandRow>
          <CmdGrip><i /><i /></CmdGrip>
          Successfully read file "/Users/jorgemuyo/Desktop/STUFF/AI_3D_Models_Grasshopper/text-to-cad-output.step"
        </CommandRow>
        <StatusRow>
          <StatusIcons>
            <G viewBox="0 0 23 32" $w={23} $h={32}><rect x="0" y="0" width="23" height="32" fill="#555" /><rect x="6" y="4" width="11" height="24" fill="#fff" /></G>
            <G viewBox="0 0 32 36" $w={32} $h={34}><path d="M4 6H30M4 18H30M4 30H30" stroke="#777" strokeWidth="4" strokeDasharray="1 4 20" /></G>
          </StatusIcons>
          <StatusItem $w={140}>CPlane</StatusItem>
          <StatusItem $w={142}>x 53.665</StatusItem>
          <StatusItem $w={175}>y -13.100</StatusItem>
          <StatusItem $w={131}>z 0</StatusItem>
          <StatusItem $w={166}>Millimeters</StatusItem>
          <Swatch />
          <StatusItem $w={172}>Default</StatusItem>
          <SnapBtn $w={140}>Grid Snap</SnapBtn>
          <SnapText>Ortho</SnapText>
          <SnapBtn $w={102} $mr={6}>Planar</SnapBtn>
          <SnapBtn $w={102}>Osnap</SnapBtn>
        </StatusRow>
        <RhFoot />
      </Rhino>

      <GH>
        <GhTabs>
          <GhActive>Prm</GhActive>
          {ghTabs.map(([t, x], i) => <GhTab key={i} $x={x}>{t}</GhTab>)}
        </GhTabs>
        <Ribbon>
          {ribbon.map(g => (
            <RGroup key={g.name}>
              <RBody>
                {g.sections.map(([n, items], i) => (
                  <React.Fragment key={i}>
                    {i > 0 ? <RDiv /> : null}
                    <RSection $n={n}>{items.map((it, j) => <RCell key={j}>{it}</RCell>)}</RSection>
                  </React.Fragment>
                ))}
              </RBody>
              <RBar>{g.name}<Plus>+</Plus></RBar>
            </RGroup>
          ))}
        </Ribbon>
        <RibbonGap />
        <GhToolbar>
          <TbGroup>
            <TbBtn $w={51}><G viewBox="0 0 30 36" $w={28} $h={34}><path d="M4 8V2H14L16 8" fill="#ddd" stroke="#aaa" /><path d="M2 32V8H16L26 4V32Z" fill="url(#gGreen)" stroke="#8ab070" /></G></TbBtn>
            <TbBtn $ml={4}><G viewBox="0 0 32 34" $w={30} $h={32}><path d="M2 2H30V32H2Z" fill="url(#gFloppy)" /><rect x="7" y="4" width="18" height="11" fill="#dfe8f6" /><rect x="10" y="21" width="12" height="11" fill="#f0f0f0" /><rect x="14" y="23" width="4" height="7" fill="#1f56c0" /></G></TbBtn>
            <TbSep $ml={8} />
            <Combo $w={148} $ml={8}>86%<ComboDrop><G viewBox="0 0 18 18" $w={17}><path d="M3 6L9 13L15 6" fill="none" stroke="#fff" strokeWidth="2.6" /></G></ComboDrop></Combo>
            <TbBtn $w={64} $ml={4}><G viewBox="0 0 34 34" $w={32}><path d="M2 10V2H10M24 2H32V10M2 24V32H10M24 32H32V24" fill="none" stroke="#111" strokeWidth="4" /><rect x="13" y="13" width="7" height="7" fill="#111" /></G></TbBtn>
            <TbBtn $w={64} $ml={22}><G viewBox="0 0 34 26" $w={30} $h={24}><path d="M1 13C9 1 25 1 33 13C25 25 9 25 1 13Z" fill="#667" /><circle cx="17" cy="13" r="8" fill="#4aa8e8" /><circle cx="17" cy="13" r="3" fill="#123" /></G></TbBtn>
            <TbBtn $ml={20}><G viewBox="0 0 32 36" $w={28} $h={32}><path d="M8 32C8 20 18 8 30 2C30 14 24 28 12 32Z" fill="#d8342a" /><path d="M20 16C24 10 28 6 30 2C30 8 28 14 24 20Z" fill="#f08a2c" /><path d="M10 34C0 26 4 16 8 18" fill="none" stroke="#7a3b20" strokeWidth="3" /></G></TbBtn>
          </TbGroup>
          <TbGroup>
            <TbBtn $w={51}><G viewBox="0 0 30 36" $w={26} $h={32}><path d="M15 1L23 12L15 24L7 12Z" fill="#d8d8d8" stroke="#999" /><ellipse cx="15" cy="26" rx="13" ry="7" fill="#333" /></G></TbBtn>
            <TbBtn $w={51} $ml={3}><G viewBox="0 0 32 36" $w={28} $h={32}><path d="M16 1L30 12L16 35L2 24Z" fill="#fff" stroke="#888" strokeWidth="2" /><path d="M8 20L24 10M11 26L26 16" stroke="#999" strokeWidth="2" /></G></TbBtn>
            <TbBtn $on $ml={3}><G viewBox="0 0 32 36" $w={28} $h={32}><path d="M14 2L28 10L22 30L12 35L4 20Z" fill="#c11e18" stroke="#5a0d08" strokeWidth="1.5" /><path d="M14 8L22 12L16 20Z" fill="#ee6a5e" /></G></TbBtn>
            <TbSep $ml={14} />
            <TbBtn $w={51} $ml={14}><G viewBox="0 0 32 36" $w={30} $h={34}><path d="M6 2C14 2 16 6 24 14C30 20 24 30 16 34C14 26 8 22 10 14Z" fill="#2f9aa0" /><path d="M12 16L18 34" stroke="#123" strokeWidth="2" /></G></TbBtn>
            <TbBtn $w={50} $ml={2}><G viewBox="0 0 32 36" $w={30} $h={34}><ellipse cx="13" cy="24" rx="9" ry="11" fill="#ccc" stroke="#888" /><path d="M18 2C28 4 32 14 24 26C16 24 12 10 18 2Z" fill="#4ca830" /><path d="M6 30L26 4" stroke="#222" strokeWidth="1.4" /></G></TbBtn>
            <TbBtn $w={51} $ml={1}><G viewBox="0 0 32 36" $w={30} $h={34}><ellipse cx="16" cy="18" rx="13" ry="15" fill="#eee" stroke="#888" /><path d="M16 3C8 3 3 10 3 18C3 26 8 33 16 33Z" fill="#d8801e" /></G></TbBtn>
            <TbSep $ml={6} />
            <TbBtn $w={63} $ml={3}><G viewBox="0 0 32 36" $w={28} $h={32}><path d="M10 2H22L30 12V24L22 34H10L2 24V12Z" fill="url(#gBall)" /></G></TbBtn>
          </TbGroup>
        </GhToolbar>

        <Canvas>
          <RedGroup $x={CX} $y={538} $w={1480} $h={735} />
          <YellowGroup $x={1555} $y={674} $w={417} $h={214} />
          <YellowGroup $x={1991} $y={674} $w={479} $h={180} />
          <YellowGroup $x={1500} $y={943} $w={136} $h={166} />

          <Wires viewBox={`${CX} ${CY} 1474 1383`} fill="none">
            <path d="M1550 905C2000 890 2600 860 3024 842" stroke="#553432" strokeWidth="5" />
            <path d="M1550 1225C2100 1228 2600 1232 3024 1234" stroke="#553432" strokeWidth="5" />
            <path d="M1550 742C1575 742 1585 746 1606 746" stroke="#3a3218" strokeWidth="6" />
            <path d="M1550 790C1570 784 1590 780 1606 780" stroke="#4d4320" strokeWidth="7" strokeDasharray="14 5" />
            <path d="M1920 746H2042" stroke="#4a3a22" strokeWidth="6" opacity=".9" />
            <path d="M1921 780H2042" stroke="#4a3a22" strokeWidth="6" opacity=".9" />
            <path d="M2420 763H2585" stroke="#4a3a22" strokeWidth="6" opacity=".9" />
            <path d="M1604 813C1560 815 1555 845 1565 870C1585 930 1632 960 1632 1000C1632 1020 1610 1025 1588 1025" stroke="#4f3f26" strokeWidth="5" />
            <path d="M2430 845C2490 840 2500 798 2585 797" stroke="#553432" strokeWidth="6" />
            <path d="M2936 797H3024" stroke="#553432" strokeWidth="6" />
          </Wires>

          <Label $x={1648} $y={672} $w={229} $h={27}>CrystallonV2-Cell Shell Fill</Label>
          <Label $x={2130} $y={672} $w={202} $h={27}>CrystallonV2-Trim Shell</Label>
          <Label $x={2641} $y={689} $w={237} $h={27}>Weaverbird's Mesh Thicken</Label>

          <Node $x={1605} $y={725} $w={315} $h={110}>
            <Port $t={11} /><Port $t={45} /><Port $t={80} /><Port $right $t={45} />
            <NodeBody>
              <InCol><div>Unit Cell (shell)</div><div>Voxels</div><div>Tolerance</div></InCol>
              <NodeIcon><CellIcon /></NodeIcon>
              <OutCol>Lattice (shell)</OutCol>
            </NodeBody>
          </Node>
          <Node $x={2042} $y={725} $w={377} $h={76} $white>
            <Port $t={11} /><Port $t={45} /><Port $right $t={28} />
            <NodeBody>
              <InCol><div>Geometry</div><div>Lattice (shell)</div></InCol>
              <NodeIcon><TrimIcon /></NodeIcon>
              <OutCol>Trimmed Lattice (shell)</OutCol>
            </NodeBody>
          </Node>
          <SliderNode $x={2087} $y={828} $w={339} $h={35}>
            <SliderName>Number Slider</SliderName>
            <SliderRail>
              <G viewBox="0 0 200 31" $w={200} $h={31}><path d="M14 12V20H185V12M30 14V20M60 12V20M85 14V20M105 14V20M122 14V20M140 14V20M160 14V20" stroke="#aaa" fill="none" strokeWidth="1" /><circle cx="42" cy="14" r="4.5" fill="#fff" stroke="#000" strokeWidth="3" /></G>
              <SliderVal>0.15</SliderVal>
            </SliderRail>
            <Port $right $t={8} />
          </SliderNode>
          <Node $x={2585} $y={742} $w={349} $h={110}>
            <Port $t={12} /><Port $t={46} /><Port $t={80} /><Port $right $t={46} />
            <NodeBody>
              <InCol><div>Mesh/Curves</div><div>Distance</div><div>OffsetType</div></InCol>
              <NodeIcon><ThickenIcon /></NodeIcon>
              <OutCol $pr={13}>Output Mesh/Curves</OutCol>
            </NodeBody>
          </Node>
          <SliderNode $x={2891} $y={927} $w={339} $h={35}><SliderName>Number Slider</SliderName><SliderRail /></SliderNode>
          <PanelNode $x={1550} $y={993} $w={33} $h={63}>1<Port $right $t={23} /></PanelNode>

          <Knob viewBox="0 0 90 92">
            <circle cx="45" cy="46" r="40" fill="none" stroke="#000" strokeWidth="9" strokeDasharray="7 6" transform="translate(1 -2)" />
            <ellipse cx="43" cy="47" rx="39" ry="39" fill="url(#gKnob)" stroke="#111" strokeWidth="2" />
            <ellipse cx="43" cy="47" rx="37" ry="37" fill="none" stroke="#fff" strokeWidth="3" />
            <path d="M43 10L52 20L36 20ZM75 30L70 42L64 30ZM12 62L22 62L14 74ZM72 68L62 76L62 62Z" fill="#fff" />
            <path d="M4 16L14 20L8 34Z" fill="#000" />
          </Knob>
          <Bracket />
        </Canvas>

        <GhStatus>
          <G viewBox="0 0 30 36" $w={30} $h={38}><ellipse cx="15" cy="18" rx="14" ry="17" fill="#2a62b8" stroke="#123a80" strokeWidth="2" /><ellipse cx="15" cy="13" rx="4" ry="8" fill="none" stroke="#dfe8f6" strokeWidth="2.5" /><circle cx="15" cy="28" r="3" fill="none" stroke="#dfe8f6" strokeWidth="2" /></G>
          <StatusMsg>Solution completed in ~136.0 seconds (160 seconds ago)</StatusMsg>
          1.0.0008
        </GhStatus>
      </GH>
    </Root>
  </>
);

export default App;
